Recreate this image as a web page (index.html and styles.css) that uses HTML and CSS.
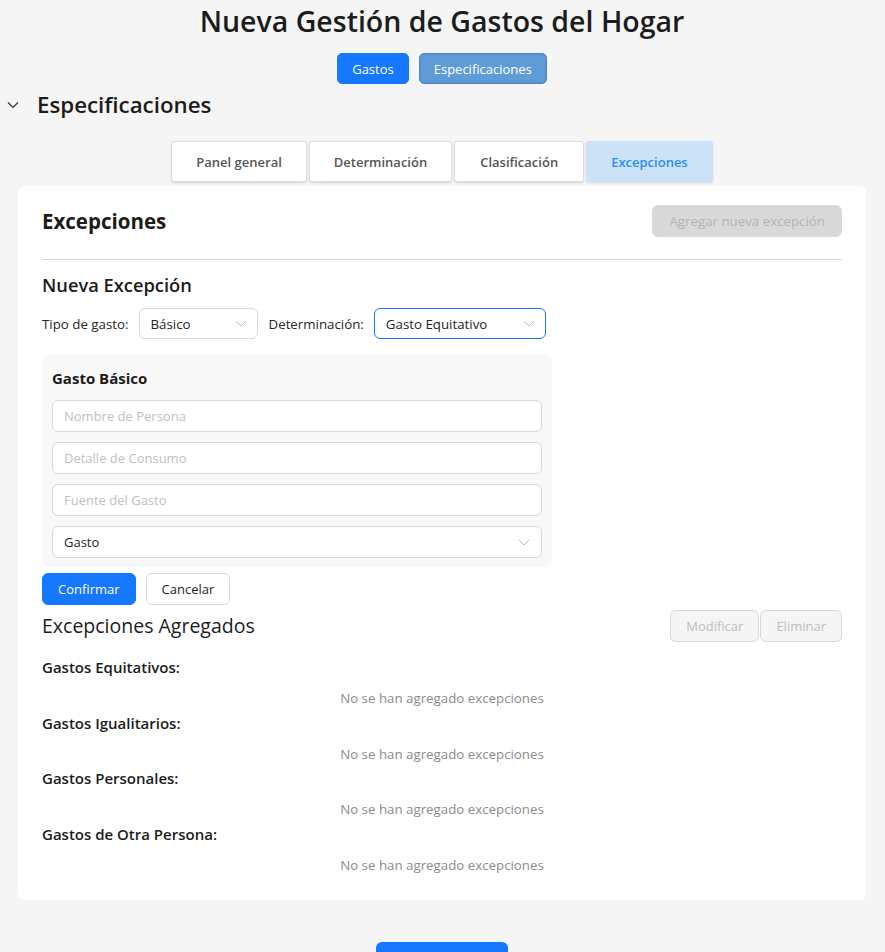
FILE: index.html
```html
<!DOCTYPE html>
<html lang="es">
<head>
<meta charset="utf-8">
<title>Nueva Gestión de Gastos del Hogar</title>
<link rel="stylesheet" href="styles.css">
</head>
<body>
<div class="app">
  <h1 class="title">Nueva Gestión de Gastos del Hogar</h1>
  <nav class="topnav">
    <button class="nav-btn primary">Gastos</button>
    <button class="nav-btn active">Especificaciones</button>
  </nav>
  <div class="section-head">
    <svg class="toggle" width="12" height="8" viewBox="0 0 12 8"><path d="M1 1.5 L6 6.5 L11 1.5" fill="none" stroke="#333" stroke-width="1.2"/></svg>
    <h2>Especificaciones</h2>
  </div>
  <div class="tabs">
    <button class="tab">Panel general</button>
    <button class="tab">Determinación</button>
    <button class="tab">Clasificación</button>
    <button class="tab selected">Excepciones</button>
  </div>
  <main class="card">
    <div class="card-head">
      <h3>Excepciones</h3>
      <button class="btn disabled-solid">Agregar nueva excepción</button>
    </div>
    <hr class="divider">
    <h4 class="sub">Nueva Excepción</h4>
    <div class="filters">
      <span class="lbl">Tipo de gasto:</span>
      <div class="select w-basic"><span>Básico</span><svg class="chev" width="12" height="7" viewBox="0 0 12 7"><path d="M1 1 L6 6 L11 1" fill="none" stroke="#bbb" stroke-width="1"/></svg></div>
      <span class="lbl">Determinación:</span>
      <div class="select w-det focus"><span>Gasto Equitativo</span><svg class="chev" width="12" height="7" viewBox="0 0 12 7"><path d="M1 1 L6 6 L11 1" fill="none" stroke="#bbb" stroke-width="1"/></svg></div>
    </div>
    <div class="formbox">
      <div class="formbox-title">Gasto Básico</div>
      <div class="field placeholder">Nombre de Persona</div>
      <div class="field placeholder">Detalle de Consumo</div>
      <div class="field placeholder">Fuente del Gasto</div>
      <div class="field select-field"><span>Gasto</span><svg class="chev" width="12" height="7" viewBox="0 0 12 7"><path d="M1 1 L6 6 L11 1" fill="none" stroke="#bbb" stroke-width="1"/></svg></div>
    </div>
    <div class="actions">
      <button class="btn primary">Confirmar</button>
      <button class="btn outline">Cancelar</button>
    </div>
    <div class="list-head">
      <h4 class="sub big">Excepciones Agregados</h4>
      <div class="group">
        <button class="btn disabled-outline">Modificar</button>
        <button class="btn disabled-outline">Eliminar</button>
      </div>
    </div>
    <div class="cat">Gastos Equitativos:</div>
    <div class="empty">No se han agregado excepciones</div>
    <div class="cat">Gastos Igualitarios:</div>
    <div class="empty">No se han agregado excepciones</div>
    <div class="cat">Gastos Personales:</div>
    <div class="empty">No se han agregado excepciones</div>
    <div class="cat">Gastos de Otra Persona:</div>
    <div class="empty">No se han agregado excepciones</div>
  </main>
  <div class="footer">
    <button class="save" aria-label="Guardar"></button>
  </div>
</div>
</body>
</html>
```
FILE: styles.css
```css
* { box-sizing: border-box; }
html, body { margin: 0; padding: 0; }
body {
  background: #f5f5f5;
  font-family: "Open Sans", "Noto Sans", "Liberation Sans", sans-serif;
  color: #1f1f1f;
}
button { font-family: inherit; }
.app { padding: 0 19px 0 18px; }

.title {
  margin: 0;
  text-align: center;
  font-size: 28.5px;
  font-weight: 600;
  line-height: 42px;
  color: #1c1c1c;
}

.topnav {
  display: flex;
  justify-content: center;
  gap: 10px;
  margin-top: 11px;
}
.nav-btn {
  height: 31px;
  padding: 0 14px;
  border-radius: 5px;
  border: 1px solid transparent;
  color: #fff;
  font-size: 13px;
  cursor: pointer;
}
.nav-btn.primary { background: #1677ff; border-color: #1677ff; }
.nav-btn.active { background: #5f9bd6; border-color: #4b86c4; box-shadow: inset 0 0 2px rgba(0,0,0,.15); }

.section-head {
  display: flex;
  align-items: center;
  height: 40px;
  margin-left: -11px;
}
.toggle { margin-right: 18px; margin-top: 2px; }
.section-head h2 {
  margin: 0;
  font-size: 22.3px;
  font-weight: 600;
  color: #1c1c1c;
}

.tabs {
  display: flex;
  justify-content: center;
  gap: 2px;
  margin-top: 17px;
}
.tab {
  height: 41px;
  padding: 0 24px;
  background: #fff;
  border: 1px solid #dcdcdc;
  border-radius: 3px;
  font-size: 13px;
  font-weight: 600;
  color: #555;
  box-shadow: 0 1px 2px rgba(0,0,0,.12);
}
.tab:nth-child(3) { padding: 0 25px; }
.tab.selected {
  background: #cce3f7;
  border-color: #cce3f7;
  color: #2a8cf0;
  padding: 0 24px;
}

.card {
  margin-top: 4px;
  background: #fff;
  border-radius: 7px;
  padding: 19px 24px 23px;
}
.card-head {
  display: flex;
  justify-content: space-between;
  align-items: center;
}
.card-head h3 {
  margin: 0;
  font-size: 20.5px;
  font-weight: 700;
  color: #1c1c1c;
}
.btn {
  height: 32px;
  padding: 0 15px;
  border-radius: 6px;
  font-size: 13px;
  border: 1px solid transparent;
  background: #fff;
}
.btn.disabled-solid { background: #d9d9d9; color: #b3b3b3; border-color: #d9d9d9; padding: 0 16px; font-size: 13.3px; }
.btn.primary { background: #1677ff; border-color: #1677ff; color: #fff; }
.btn.outline { border-color: #d9d9d9; color: #262626; }
.btn.disabled-outline { background: #f5f5f5; border-color: #d9d9d9; color: #bdbdbd; }

.divider {
  border: 0;
  border-top: 1px solid #dcdcdc;
  margin: 22px 0 0;
}
.sub {
  margin: 12px 0 0;
  font-size: 18.3px;
  font-weight: 600;
  line-height: 26px;
  color: #1c1c1c;
}
.filters {
  display: flex;
  align-items: center;
  margin-top: 10px;
  font-size: 13.3px;
}
.lbl { color: #262626; margin-right: 10px; }
.select {
  height: 31px;
  border: 1px solid #d9d9d9;
  border-radius: 6px;
  background: #fff;
  display: flex;
  align-items: center;
  justify-content: space-between;
  padding: 0 10px 0 11px;
  margin-right: 11px;
  color: #262626;
}
.w-basic { width: 119px; }
.w-det { width: 172px; }
.select.focus { border-color: #1677ff; }

.formbox {
  margin-top: 16px;
  width: 510px;
  background: #f8f8f8;
  border-radius: 8px;
  padding: 12px 10px 9px;
}
.formbox-title {
  font-size: 15px;
  font-weight: 700;
  line-height: 22px;
  color: #1c1c1c;
  margin-bottom: 11px;
}
.field {
  height: 32px;
  background: #fff;
  border: 1px solid #d9d9d9;
  border-radius: 6px;
  display: flex;
  align-items: center;
  justify-content: space-between;
  padding: 0 11px;
  font-size: 13px;
  color: #262626;
}
.field + .field { margin-top: 10px; }
.field.placeholder { color: #bfbfbf; }

.actions {
  display: flex;
  gap: 10px;
  margin-top: 6px;
}

.list-head {
  display: flex;
  justify-content: space-between;
  align-items: center;
  margin-top: 5px;
}
.sub.big { margin: 0; font-size: 19.5px; font-weight: 500; }
.group { display: flex; gap: 1px; }

.cat {
  margin-top: 14px;
  font-size: 15px;
  font-weight: 600;
  line-height: 22px;
  color: #1c1c1c;
}
.empty + .cat { margin-top: 1.5px; }
.empty {
  margin-top: 8px;
  text-align: center;
  font-size: 13.3px;
  line-height: 24px;
  color: #8c8c8c;
}

.footer {
  display: flex;
  justify-content: center;
  margin-top: 42px;
  padding-bottom: 20px;
}
.save {
  width: 132px;
  height: 40px;
  border: 0;
  border-radius: 6px;
  background: #1677ff;
}
```
